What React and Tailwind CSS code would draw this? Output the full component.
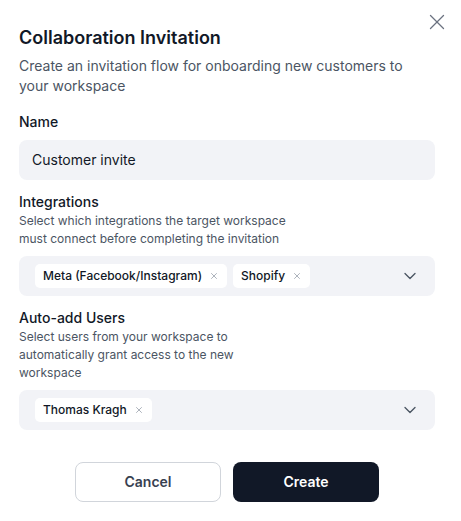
import { X, ChevronDown } from 'lucide-react';

function Chip({ label }) {
  return (
    <span className="flex h-6 items-center gap-[7px] rounded-[5px] bg-white pl-2 pr-[8px] text-xs font-medium text-[#111827]">
      {label}
      <X className="h-[10px] w-[10px] text-[#9ca3af]" strokeWidth={2} />
    </span>
  );
}

function MultiSelect({ items }) {
  return (
    <div className="flex h-10 w-full items-center rounded-lg bg-[#f2f3f7] pl-4 pr-[15px]">
      <div className="flex flex-1 gap-[6px]">
        {items.map((i) => (
          <Chip key={i} label={i} />
        ))}
      </div>
      <ChevronDown className="h-5 w-5 text-[#4b5563]" strokeWidth={1.6} />
    </div>
  );
}

export default function App() {
  return (
    <div
      className="relative min-h-screen bg-white pl-[19px] pt-6"
      style={{ fontFamily: 'Inter, "Noto Sans", sans-serif' }}
    >
      <button className="absolute left-[424px] top-[9px] text-[#6b7280]">
        <X className="h-[26px] w-[26px]" strokeWidth={1.2} />
      </button>

      <div className="w-[416px]">
        <h1 className="text-lg font-semibold leading-7 text-[#111827]">Collaboration Invitation</h1>
        <p className="mt-1 text-sm leading-5 text-[#4b5563]">
          Create an invitation flow for onboarding new customers to your workspace
        </p>

        <label className="mt-4 block text-sm font-medium leading-5 text-[#111827]">Name</label>
        <div className="mt-2 flex h-10 items-center rounded-lg bg-[#f2f3f7] pl-[13px] text-sm text-[#111827]">
          Customer invite
        </div>

        <label className="mt-3 block text-sm font-medium leading-5 text-[#111827]">Integrations</label>
        <p className="max-w-[270px] text-xs leading-[18px] text-[#4b5563]">
          Select which integrations the target workspace must connect before completing the invitation
        </p>
        <div className="mt-2">
          <MultiSelect items={['Meta (Facebook/Instagram)', 'Shopify']} />
        </div>

        <label className="mt-3 block text-sm font-medium leading-5 text-[#111827]">Auto-add Users</label>
        <p className="max-w-[270px] text-xs leading-[18px] text-[#4b5563]">
          Select users from your workspace to automatically grant access to the new workspace
        </p>
        <div className="mt-2">
          <MultiSelect items={['Thomas Kragh']} />
        </div>

        <div className="mt-8 flex justify-center gap-3">
          <button className="h-10 w-[146px] rounded-lg border border-[#d1d5db] bg-white text-sm font-semibold text-[#374151]">
            Cancel
          </button>
          <button className="h-10 w-[146px] rounded-lg bg-[#111827] text-sm font-semibold text-white">
            Create
          </button>
        </div>
      </div>
    </div>
  );
}
